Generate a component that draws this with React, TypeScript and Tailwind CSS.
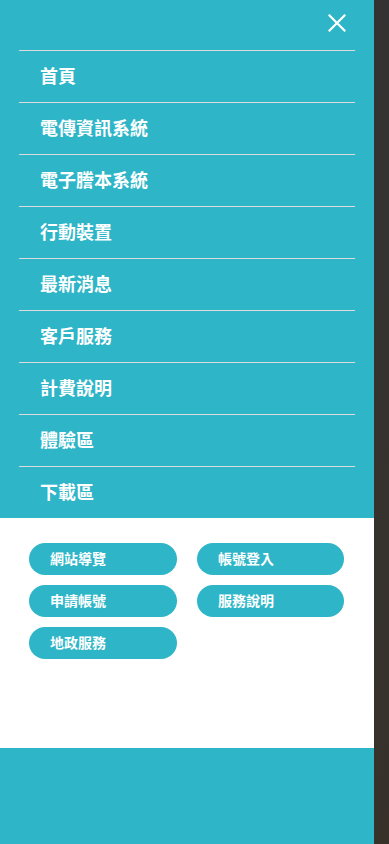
import React from "react";

const items = ["首頁", "電傳資訊系統", "電子謄本系統", "行動裝置", "最新消息", "客戶服務", "計費說明", "體驗區", "下載區"];
const buttons = ["網站導覽", "帳號登入", "申請帳號", "服務說明", "地政服務"];

export default function App() {
  return (
    <div
      className="flex w-[389px] h-[844px] overflow-hidden"
      style={{ fontFamily: '"Noto Sans CJK TC", "Noto Sans", sans-serif' }}
    >
      <div className="w-[374px] h-full flex flex-col bg-[#2eb5c7]">
        <div className="h-[50px] flex items-start justify-end pr-[28px] pt-[14px]">
          <svg width="18" height="18" viewBox="0 0 18 18">
            <path d="M1.5 1.5 L16.5 16.5 M16.5 1.5 L1.5 16.5" stroke="#fff" strokeWidth="2.2" strokeLinecap="square" />
          </svg>
        </div>
        <div className="px-[19px]">
          {items.map((t) => (
            <div
              key={t}
              className="border-t border-[#dcdcdc] h-[52px] flex items-center pl-[21px] pb-[4px] text-white text-[18px] leading-none font-bold"
            >
              {t}
            </div>
          ))}
        </div>
        <div className="bg-white h-[230px] pl-[29px] pt-[25px]">
          <div className="grid grid-cols-[148px_147px] gap-x-[20px] gap-y-[10px]">
            {buttons.map((b) => (
              <div
                key={b}
                className="h-[32px] rounded-full bg-[#2eb5c7] text-white text-[14px] leading-none font-bold flex items-center pl-[21px] pb-[3px]"
              >
                {b}
              </div>
            ))}
          </div>
        </div>
        <div className="flex-1 bg-[#2eb5c7]" />
      </div>
      <div className="w-[15px] h-full bg-gradient-to-b from-[#333333] to-[#37312a]" />
    </div>
  );
}
